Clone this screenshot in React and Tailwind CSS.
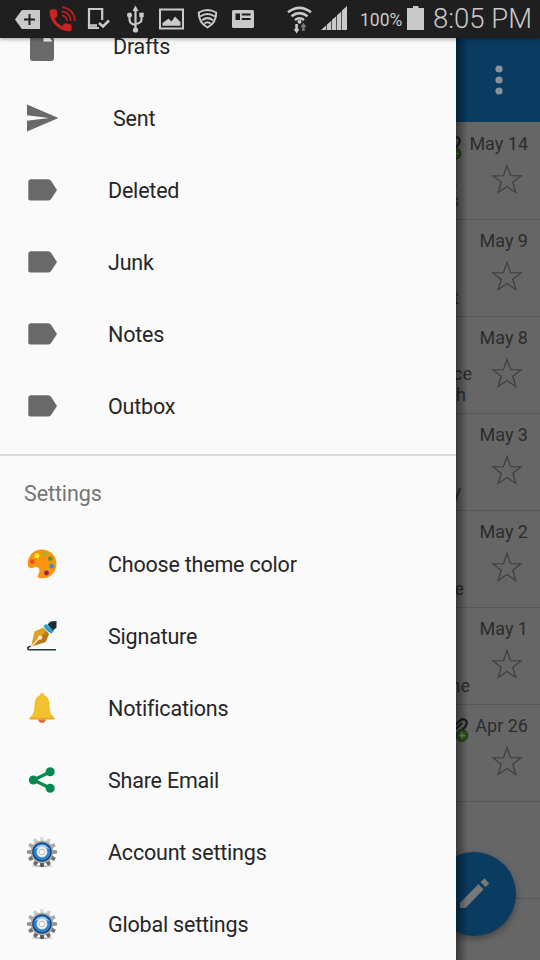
import React from 'react';

const INK = '#c9c9c9';

function StatusBar() {
  return (
    <header className="relative z-20 flex h-[38px] w-full shrink-0 items-center bg-[#1f1f1f] font-['Roboto',sans-serif] text-[#c9c9c9] shadow-[0_1px_4px_rgba(0,0,0,0.4)]">
      <svg className="h-[38px] w-[45px] shrink-0" viewBox="0 0 45 38">
        <path d="M15 19.5L21.5 10.5Q22 10 23 10H40V29H23Q22 29 21.5 28.5Z" fill={INK} />
        <path d="M24 19.5H35M29.5 14V25" stroke="#1f1f1f" strokeWidth="2" />
      </svg>
      <svg className="h-[38px] w-[38px] shrink-0" viewBox="45 0 38 38" fill="none" stroke="#b8201f" strokeWidth="1.7">
        <path
          transform="translate(46.5 6.3) scale(1.17)"
          stroke="#cc2422"
          strokeWidth="0.8"
          fill="#cc2422"
          d="M6.62 10.79c1.44 2.83 3.76 5.14 6.59 6.59l2.2-2.2c.27-.27.67-.36 1.02-.24 1.12.37 2.33.57 3.57.57.55 0 1 .45 1 1V20c0 .55-.45 1-1 1-9.39 0-17-7.61-17-17 0-.55.45-1 1-1h3.5c.55 0 1 .45 1 1 0 1.25.2 2.45.57 3.57.11.35.03.74-.25 1.02l-2.2 2.2z"
        />
        <path d="M62 15.3Q66.5 16 67 21M62 11.3Q70 12.300 71 21M62 7.200Q73.500 8.500 75 21" />
      </svg>
      <svg className="h-[38px] w-[35px] shrink-0" viewBox="83 0 35 38" fill="none" stroke={INK}>
        <path d="M102.200 20V9H89V28H99" strokeWidth="2.200" />
        <path d="M90 25.500H97" strokeWidth="2.500" />
        <path d="M99 23L103 26.500L109 20.500" strokeWidth="2.500" />
      </svg>
      <svg className="h-[38px] w-[34px] shrink-0" viewBox="118 0 34 38" fill="none" stroke={INK} strokeWidth="2.200">
        <path d="M135.500 9V30M129.500 16V19.500Q129.500 24 135.500 25M141.500 16V19.500Q141.500 23 135.500 24" />
        <path d="M135.500 5.500L138.500 11H132.500Z" fill={INK} stroke="none" />
        <circle cx="135.500" cy="30" r="2.600" fill={INK} stroke="none" />
        <circle cx="129.500" cy="15" r="2.500" fill={INK} stroke="none" />
        <path d="M139.300 12.700H143.700V17H139.300Z" fill={INK} stroke="none" />
      </svg>
      <svg className="h-[38px] w-[38px] shrink-0" viewBox="152 0 38 38">
        <path d="M159 8.500H184V29.500H159ZM161 10.500V27.500H182V10.500Z" fillRule="evenodd" fill={INK} />
        <path d="M162.500 25.800V23L168.500 18.500L171.500 21.500L175 16.500L180.500 22V25.800Z" fill={INK} />
      </svg>
      <svg className="h-[38px] w-[35px] shrink-0" viewBox="190 0 35 38" fill="none" stroke={INK} strokeWidth="2">
        <path d="M198.800 12.500Q207.500 7.500 216.200 12.500Q216.500 22.500 207.500 27.500Q198.500 22.500 198.800 12.500Z" />
        <path d="M200 16.500Q207.500 11.500 215 16.500M202 20.300Q207.500 16 213 20.300M204.500 23.500Q207.500 21 210.500 23.500" />
      </svg>
      <svg className="h-[38px] w-[55px] shrink-0" viewBox="225 0 55 38">
        <rect x="232" y="10" width="22" height="18" rx="1.500" fill={INK} />
        <path d="M235.500 13.500H240V20H235.500ZM241.800 13.500H250.500V15.500H241.800ZM241.800 18H250.500V20H241.800Z" fill="#1f1f1f" />
      </svg>
      <svg className="h-[38px] w-[38px] shrink-0" viewBox="280 0 38 38" fill="none" stroke={INK} strokeWidth="2.500">
        <path d="M288 12.300Q299.500 3.500 311 12.300M291.500 16.200Q299.500 10 307.500 16.200M295 20Q299.500 16.500 304 20" />
        <circle cx="299.500" cy="21.800" r="2" fill={INK} stroke="none" />
        <path d="M295.300 24H297.900V29H299.500L296.600 33.500L293.700 29H295.300Z" fill={INK} stroke="none" />
        <path d="M302.100 31V27H300.300L303.400 22.800L306.500 27H304.700V31Z" fill="#777777" stroke="none" />
      </svg>
      <svg className="h-[38px] w-[41px] shrink-0" viewBox="318 0 41 38" fill={INK}>
        <path d="M321 30L326.300 25.200V30ZM327 24.600L331.300 20.800V30H327ZM332 19.800L336.300 16.200V30H332ZM337 15.200L341.300 11.500V30H337ZM342 10.500L347 6V30H342Z" />
      </svg>
      <span className="ml-px w-[44px] pt-[2px] text-[17.5px] leading-[22px]">100%</span>
      <svg className="ml-[3px] h-[38px] w-[17px] shrink-0" viewBox="407 0 17 38" fill={INK}>
        <path d="M413 6H418.500V8H424V30H407V8H413Z" />
      </svg>
      <span className="ml-[9px] whitespace-nowrap text-[27.5px] font-light leading-[38px]">8:05 PM</span>
    </header>
  );
}

const Draft = () => (
  <svg className="h-8 w-9" viewBox="24 30 36 32">
    <path d="M30 30H45L54 39V58Q54 61 51 61H33Q30 61 30 58Z" fill="#696969" />
    <path d="M43.500 30V41.500H52.500Z" fill="#fafafa" />
  </svg>
);
const Send = () => (
  <svg className="h-9 w-9" viewBox="24 100 36 36">
    <path d="M27 104.500L58.500 118L27 131.500V120.800L49 118L27 115.200Z" fill="#696969" />
  </svg>
);
const Label = () => (
  <svg className="h-9 w-9" viewBox="24 172 36 36">
    <path d="M31 179.300H48Q50 179.300 51.200 181L57 190L51.200 198.900Q50 200.600 48 200.600H31Q28.300 200.600 28.300 197.900V182Q28.300 179.300 31 179.300Z" fill="#696969" />
  </svg>
);
const Palette = () => (
  <svg className="h-9 w-9" viewBox="24 546 36 36">
    <path d="M27.700 564C27.500 555.500 34 549.500 42 549.500S56.500 556 56.500 564S50 578.300 43 578.300C40 578.300 37.500 578 37.600 576.500C37.700 574.500 40 573.500 39.300 569.500C38.600 566.500 35.500 566 33.500 567.500C31.500 569 28 568.500 27.700 564Z" fill="#f8940f" />
    <circle cx="32.300" cy="561.700" r="2.400" fill="#f04a25" />
    <circle cx="36.800" cy="555.700" r="2.500" fill="#ffe32e" />
    <circle cx="44.500" cy="554" r="2.300" fill="#a3b52c" />
    <circle cx="50.300" cy="558.700" r="2.300" fill="#4c9a35" />
    <circle cx="51.700" cy="566.200" r="2.400" fill="#3390c8" />
    <circle cx="46.500" cy="573" r="2.400" fill="#9a2457" />
  </svg>
);
const Pen = () => (
  <svg className="h-9 w-9" viewBox="24 618 36 36">
    <path d="M56 649.800H30Q27.800 649.800 27.800 648Q28 646.300 31 646.500" fill="none" stroke="#233943" strokeWidth="1.600" />
    <path d="M31 646.500L34.500 631.500L43.500 627.500L49 634L45.500 642Z" fill="#dfa025" />
    <path d="M31.500 646.500L45.500 642L49 634L46 631Z" fill="#b87918" />
    <path d="M31 647L39 638.500" stroke="#f5ead0" strokeWidth="1.500" />
    <circle cx="40" cy="637.600" r="2.200" fill="#fff2d8" />
    <path d="M43.500 626L46 624L54 631L51.500 633.500Q47 632 43.500 626Z" fill="#26a0cc" />
    <path d="M47.500 624.500L50.500 621.500L56.500 621V627.500L53 630.500Z" fill="#182b38" />
  </svg>
);
const Bell = () => (
  <svg className="h-9 w-9" viewBox="24 690 36 36">
    <path d="M37.500 718H46.500Q45.500 723 42 723T37.500 718Z" fill="#d9773b" />
    <path d="M42 693Q44 693 44.300 695.200Q49 697 49.300 703Q49.600 712 51.500 714.500L55 718.500Q54.500 719.500 53 719.500H31Q29.500 719.500 29 718.500L32.500 714.500Q34.400 712 34.700 703Q35 697 39.700 695.200Q40 693 42 693Z" fill="#f2c12e" />
    <path d="M30 718.500H54" stroke="#e5a72c" strokeWidth="1.500" />
  </svg>
);
const Share = () => (
  <svg className="h-9 w-9" viewBox="24 762 36 36">
    <path d="M50.500 771.800L33.500 780L50.500 788.300" fill="none" stroke="#078a50" strokeWidth="3.200" />
    <g fill="#078a50">
      <circle cx="50.200" cy="771.800" r="4.500" />
      <circle cx="33.300" cy="780" r="4.500" />
      <circle cx="50.200" cy="788.300" r="4.500" />
    </g>
  </svg>
);
const TEETH = [0, 30, 60, 90, 120, 150, 180, 210, 240, 270, 300, 330];
const TOOTH_FILL = ['#dddddd', '#cccccc', '#aaaaaa', '#8d8d8d', '#77736f', '#6a6460', '#5c5652', '#6a6460', '#77736f', '#8d8d8d', '#aaaaaa', '#cccccc'];
const Gear = () => (
  <svg className="h-9 w-9" viewBox="-18 -18 36 36">
    <ellipse cx="0" cy="14" rx="11" ry="1.200" fill="#c4c4c4" />
    {TEETH.map((a, i) => (
      <path key={a} d="M-2.300 -9.500L-1.600 -15H1.600L2.300 -9.500Z" transform={`rotate(${a})`} fill={TOOTH_FILL[i]} />
    ))}
    <circle r="11.300" fill="#a5a8ab" />
    <circle r="9.800" fill="#17457c" />
    <circle r="8.300" fill="#2d83cc" />
    <path d="M-7.500 -3Q0 -11.500 7.500 -3Q0 -6 -7.500 -3Z" fill="#a9cbe6" />
    <circle r="5.400" fill="#ececea" />
    <circle r="2.700" fill="#f9f9f9" stroke="#bdbdbd" strokeWidth="1" />
  </svg>
);

const FOLDERS = [
  { name: 'Drafts', Icon: Draft, indent: true },
  { name: 'Sent', Icon: Send, indent: true },
  { name: 'Deleted', Icon: Label },
  { name: 'Junk', Icon: Label },
  { name: 'Notes', Icon: Label },
  { name: 'Outbox', Icon: Label },
];
const SETTINGS = [
  { name: 'Choose theme color', Icon: Palette },
  { name: 'Signature', Icon: Pen },
  { name: 'Notifications', Icon: Bell },
  { name: 'Share Email', Icon: Share },
  { name: 'Account settings', Icon: Gear },
  { name: 'Global settings', Icon: Gear },
];

function DrawerRow({ name, Icon, indent }) {
  return (
    <li className="flex h-[72px] shrink-0 items-center pl-6">
      <span className="flex w-9 shrink-0 items-center">
        <Icon />
      </span>
      <span className={`pt-px text-[21.5px] leading-[28px] tracking-[-0.2px] text-[#262626] ${indent ? 'ml-[53px]' : 'ml-12'}`}>{name}</span>
    </li>
  );
}

function Drawer() {
  return (
    <nav className="relative z-10 flex w-[456px] shrink-0 flex-col overflow-hidden bg-[#fafafa]">
      <ul className="-mt-7 flex flex-col">
        {FOLDERS.map((f) => (
          <DrawerRow key={f.name} {...f} />
        ))}
      </ul>
      <div className="mt-3 h-[2px] shrink-0 bg-[#dadada]" />
      <h2 className="flex h-[72px] shrink-0 items-center pl-6 pt-[4px] text-[21.5px] tracking-[-0.1px] text-[#757575]">Settings</h2>
      <ul className="flex flex-col">
        {SETTINGS.map((s) => (
          <DrawerRow key={s.name} {...s} />
        ))}
      </ul>
    </nav>
  );
}

const MAILS = [
  { date: 'May 14', clip: 6, lines: [['.', 2], ['s', 3]] },
  { date: 'May 9', lines: [['', 0], ['t', 3]] },
  { date: 'May 8', lines: [['ce', 16], ['h', 10]] },
  { date: 'May 3', lines: [['', 0], ['y', 5]] },
  { date: 'May 2', lines: [['', 0], ['e', 8]] },
  { date: 'May 1', lines: [['', 0], ['ne', 14]] },
  { date: 'Apr 26', clip: 13, lines: [] },
];

function Attachment({ width }) {
  return (
    <span className="flex h-[32px] shrink-0 justify-end overflow-hidden" style={{ width }}>
      <svg className="h-[32px] w-[24px] shrink-0" viewBox="0 0 24 32">
        <path d="M5 20L15 10.500Q18.500 8 21 10.500Q23 13.500 20 17L15 22" fill="none" stroke="#1c1c1c" strokeWidth="2.200" />
        <path d="M10 20L17 13" stroke="#1c1c1c" strokeWidth="1.800" />
        <circle cx="17" cy="25.500" r="5.800" fill="#2c5420" stroke="#18300f" />
        <path d="M14 25.500H20M17 22.500V28.500" stroke="#6f8a62" strokeWidth="1.600" />
      </svg>
    </span>
  );
}

function MailRow({ date, clip, lines }) {
  return (
    <li className="flex h-[97px] shrink-0 flex-col border-b border-[#585858] text-[#2c2c2c]">
      <div className="flex h-[42px] items-center justify-between pr-3">
        {clip ? <Attachment width={clip} /> : <span />}
        <span className="whitespace-nowrap text-[18px] leading-[24px]">{date}</span>
      </div>
      <div className="flex justify-between pr-4">
        <div className="flex w-4 flex-col pt-1">
          {lines.map(([text, width], i) => (
            <span key={i} className="flex h-[21px] justify-end overflow-hidden text-[18px] leading-[21px]" style={{ width }}>
              {text}
            </span>
          ))}
        </div>
        <svg className="-mt-0.5 h-[34px] w-[34px]" viewBox="0 0 34 34">
          <path d="M17 2.500L20.600 12.600L31 12.900L22.800 19.300L25.800 29.500L17 23.500L8.200 29.500L11.200 19.300L3 12.900L13.400 12.600Z" fill="none" stroke="#404040" strokeWidth="1.300" />
        </svg>
      </div>
    </li>
  );
}

function Inbox() {
  return (
    <main className="relative flex w-[84px] shrink-0 flex-col bg-[#666666]">
      <div className="flex h-[84px] shrink-0 items-center justify-center bg-[#0a3b61] pl-px">
        <svg className="h-[34px] w-2" viewBox="0 0 8 34" fill="#8a9299">
          <circle cx="4" cy="6" r="3.600" />
          <circle cx="4" cy="17" r="3.600" />
          <circle cx="4" cy="28" r="3.600" />
        </svg>
      </div>
      <ul className="flex flex-col pt-px">
        {MAILS.map((m) => (
          <MailRow key={m.date} {...m} />
        ))}
        <li className="h-[97px] shrink-0 border-b border-[#585858]" />
      </ul>
      <button className="absolute -left-6 top-[814px] flex h-[84px] w-[84px] items-center justify-center rounded-full bg-[#0a3b61] shadow-[0_3px_7px_rgba(0,0,0,0.35)]">
        <svg className="h-9 w-9" viewBox="456 876 36 36" fill="#777777">
          <path d="M460 903L478.500 884L483.500 889.500L465.500 908H460Z" />
          <path d="M480.500 882L484.500 878.200L489.200 883.500L485.500 887.300Z" />
        </svg>
      </button>
      <div className="absolute inset-y-0 left-0 w-3 bg-gradient-to-r from-black/45 to-transparent" />
    </main>
  );
}

export default function App() {
  return (
    <div className="flex h-[960px] w-[540px] flex-col overflow-hidden bg-[#666666] font-['Roboto',sans-serif]">
      <StatusBar />
      <div className="flex h-[922px] shrink-0 overflow-hidden">
        <Drawer />
        <Inbox />
      </div>
    </div>
  );
}
